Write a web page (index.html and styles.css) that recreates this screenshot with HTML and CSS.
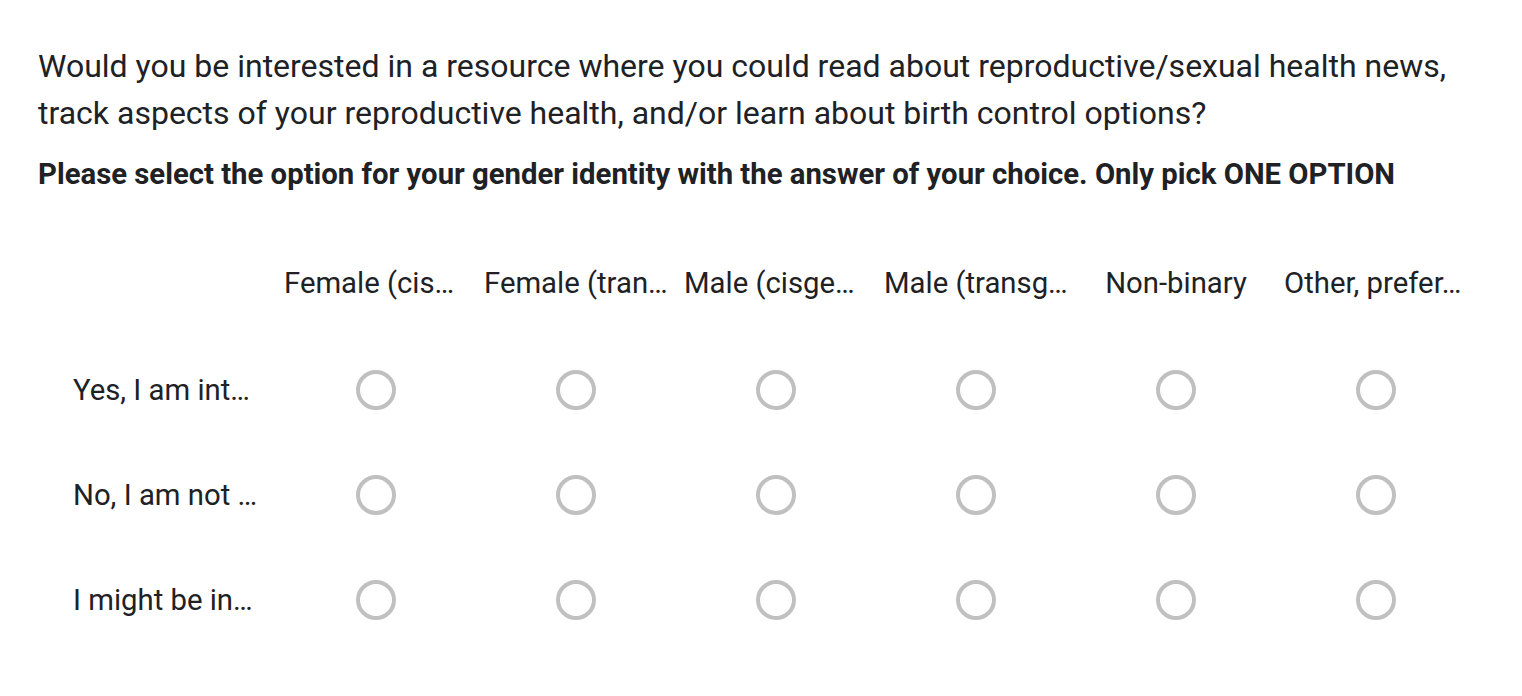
FILE: index.html
```html
<!DOCTYPE html>
<html lang="en">
<head>
<meta charset="utf-8">
<title>Question grid</title>
<link rel="stylesheet" href="styles.css">
</head>
<body>
<div class="question">
  <div class="q-title">Would you be interested in a resource where you could read about reproductive/sexual health news, track aspects of your reproductive health, and/or learn about birth control options?</div>
  <div class="q-desc">Please select the option for your gender identity with the answer of your choice. Only pick ONE OPTION</div>
  <div class="grid">
    <div class="cell corner"></div>
    <div class="cell col-head clipped" title="Female (cisgender)">Female (cis…</div>
    <div class="cell col-head clipped" title="Female (transgender)">Female (tran…</div>
    <div class="cell col-head clipped" title="Male (cisgender)">Male (cisge…</div>
    <div class="cell col-head clipped" title="Male (transgender)">Male (transg…</div>
    <div class="cell col-head">Non-binary</div>
    <div class="cell col-head clipped" title="Other, prefer not to say">Other, prefer…</div>

    <div class="cell row-head" title="Yes, I am interested">Yes, I am int…</div>
    <div class="cell"><span class="radio"></span></div>
    <div class="cell"><span class="radio"></span></div>
    <div class="cell"><span class="radio"></span></div>
    <div class="cell"><span class="radio"></span></div>
    <div class="cell"><span class="radio"></span></div>
    <div class="cell"><span class="radio"></span></div>

    <div class="cell row-head" title="No, I am not interested">No, I am not …</div>
    <div class="cell"><span class="radio"></span></div>
    <div class="cell"><span class="radio"></span></div>
    <div class="cell"><span class="radio"></span></div>
    <div class="cell"><span class="radio"></span></div>
    <div class="cell"><span class="radio"></span></div>
    <div class="cell"><span class="radio"></span></div>

    <div class="cell row-head" title="I might be interested">I might be in…</div>
    <div class="cell"><span class="radio"></span></div>
    <div class="cell"><span class="radio"></span></div>
    <div class="cell"><span class="radio"></span></div>
    <div class="cell"><span class="radio"></span></div>
    <div class="cell"><span class="radio"></span></div>
    <div class="cell"><span class="radio"></span></div>
  </div>
</div>
</body>
</html>
```

FILE: styles.css
```css
html, body {
  margin: 0;
  padding: 0;
  background: #ffffff;
}

body {
  font-family: Roboto, "Liberation Sans", Arial, sans-serif;
  color: #202124;
}

.question {
  padding: 43px 0 0 38px;
}

.q-title {
  font-size: 32px;
  line-height: 47px;
  width: 1440px;
}

.q-desc {
  margin-top: 19px;
  font-size: 29.3px;
  line-height: 36px;
  font-weight: 700;
}

.grid {
  margin-top: 37px;
  display: grid;
  grid-template-columns: 238px repeat(6, 200px);
  grid-template-rows: 108px repeat(3, 105px);
}

.cell {
  display: flex;
  align-items: center;
  justify-content: center;
  white-space: nowrap;
}

.col-head {
  font-size: 29.3px;
  padding: 0 8px;
}

.col-head.clipped {
  justify-content: flex-start;
}

.row-head {
  justify-content: flex-start;
  padding-left: 35px;
  font-size: 29.3px;
}

.radio {
  width: 32px;
  height: 32px;
  border: 4px solid #c0c0c0;
  border-radius: 50%;
  box-sizing: content-box;
}
```
